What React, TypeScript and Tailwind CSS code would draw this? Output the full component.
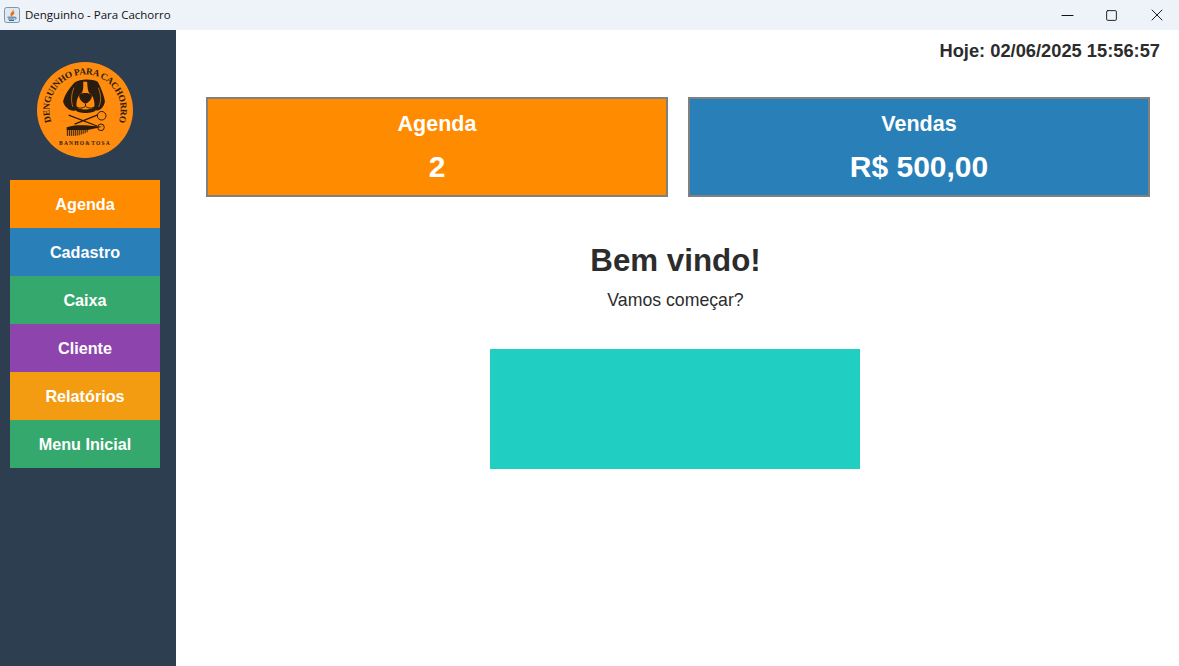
import { Minus, Square, X } from "lucide-react";

const MENU = [
  { label: "Agenda", color: "bg-[#ff8c00]" },
  { label: "Cadastro", color: "bg-[#2980b9]" },
  { label: "Caixa", color: "bg-[#35a86e]" },
  { label: "Cliente", color: "bg-[#8e44ad]" },
  { label: "Relatórios", color: "bg-[#f39c12]" },
  { label: "Menu Inicial", color: "bg-[#35a86e]" },
];

function JavaIcon() {
  return (
    <svg width="16" height="16" viewBox="0 0 16 16" className="shrink-0">
      <rect x="0.5" y="0.5" width="15" height="15" rx="2" fill="#dfe7f0" stroke="#7f97ad" />
      <path d="M9 2c.8 2-3 3.500-2.500 6 .2 1 .8 1.500 1.500 2-.2-1 .2-1.500 1.500-2.500C11 6.500 10.500 5 9.500 4.500 9.800 3.500 9.500 2.500 9 2z" fill="#e8711a" />
      <path d="M3.500 10.200h7.500M4 12h6.500M5 13.500h5" fill="none" stroke="#3f6d96" strokeWidth="1" />
      <path d="M11 10.200c1.800 0 1.800 1.800 0 2" fill="none" stroke="#3f6d96" strokeWidth="0.8" />
    </svg>
  );
}

function TitleBar() {
  return (
    <div className="flex h-[30px] items-center justify-between bg-[#eef2f9] pl-[4px]">
      <div className="flex items-center gap-[5px] font-['Open_Sans',sans-serif] text-[11.5px] text-[#111]">
        <JavaIcon />
        <span>Denguinho - Para Cachorro</span>
      </div>
      <div className="flex h-full items-center text-[#111]">
        <div className="flex w-[44px] justify-center">
          <Minus size={19} strokeWidth={1.26} />
        </div>
        <div className="flex w-[46px] justify-center pr-[2px]">
          <Square size={13} strokeWidth={1.7} />
        </div>
        <div className="flex w-[44px] justify-center">
          <X size={20} strokeWidth={1.15} />
        </div>
      </div>
    </div>
  );
}

function Logo() {
  return (
    <svg width="96" height="96" viewBox="0 0 97 97" className="block">
      <circle cx="48.500" cy="48.500" r="48.500" fill="#ff8c0f" />
      <defs>
        <path id="logo-arc" d="M48.500 84.500a36 36 0 0 1 0-72a36 36 0 0 1 0 72" />
      </defs>
      <text fill="#2b1c10" fontFamily="'Liberation Serif', serif" fontSize="9.400" fontWeight="700" letterSpacing="-0.3">
        <textPath href="#logo-arc" startOffset="50%" textAnchor="middle">
          DENGUINHO PARA CACHORRO
        </textPath>
      </text>
      <g transform="translate(18 16) scale(0.3333)" fill="#2b1c10" stroke="none">
        {/* cabeca do cachorro */}
        <path d="M60 14C75 2 115 2 130 12c10 18 20 43 22 60-4 20-17 30-28 26-4 10-54 12-60 0-14 6-34-6-39-26 5-22 20-42 35-58z" />
        <path d="M86 12h12c1 15 2 28 6 34 10 4 18 22 16 42-4 10-50 12-54 0-2-20 6-38 16-42 4-6 5-19 4-34z" fill="#ff8c0f" />
        <path d="M58 30c-8 20-10 40-3 58M132 30c8 20 10 40 1 58" fill="none" stroke="#ff8c0f" strokeWidth="2" />
        <path d="M74 52c6-8 30-8 38 0 2 12-10 24-19 26-9-2-21-14-19-26z" />
        <path d="M93 78v8M62 84c10 12 24 8 31 2 7 6 21 10 31-2" fill="none" stroke="#2b1c10" strokeWidth="3" />
        {/* tesoura */}
        <path d="M42 113l86 33M60 140l70-28" fill="none" stroke="#2b1c10" strokeWidth="4" />
        <circle cx="142" cy="115" r="13" fill="none" stroke="#2b1c10" strokeWidth="3" />
        <circle cx="140" cy="150" r="10" fill="none" stroke="#2b1c10" strokeWidth="3" />
        {/* pente */}
        <path d="M36 150c24-10 59-7 109-2l-45 10H36z" />
        <path d="M38 156v20M44 156v20M50 156v20M56 156v20M62 156v20M68 156v19M74 156v18M80 156v16M86 156v14M92 156v12M98 156v9" fill="none" stroke="#2b1c10" strokeWidth="3" />
      </g>
      <text x="48.500" y="84" textAnchor="middle" fill="#2b1c10" fontFamily="'Liberation Serif', serif" fontSize="5.500" fontWeight="700" letterSpacing="1.300">
        BANHO&amp;TOSA
      </text>
    </svg>
  );
}

function Sidebar() {
  return (
    <aside className="flex w-[176px] shrink-0 flex-col bg-[#2c3e50] px-[10px] pt-[32px]">
      <div className="flex justify-center pr-[6px]">
        <Logo />
      </div>
      <nav className="mt-[22px] flex flex-col">
        {MENU.map((item) => (
          <button
            key={item.label}
            type="button"
            className={`h-[48px] w-[150px] text-center text-[16.2px] font-bold text-white ${item.color}`}
          >
            {item.label}
          </button>
        ))}
      </nav>
    </aside>
  );
}

function StatCard({ title, value, color }: { title: string; value: string; color: string }) {
  return (
    <div className={`flex h-[100px] flex-1 flex-col items-center border-2 border-[#808080] pt-[13px] text-white ${color}`}>
      <span className="text-[21.5px] font-bold leading-[25px]">{title}</span>
      <span className="mt-[12px] text-[30px] font-bold leading-[36px]">{value}</span>
    </div>
  );
}

export default function App() {
  return (
    <div className="flex h-[666px] w-[1179px] flex-col overflow-hidden bg-white font-['Liberation_Sans',Arial,sans-serif]">
      <TitleBar />
      <div className="flex min-h-0 flex-1">
        <Sidebar />
        <main className="flex min-w-0 flex-1 flex-col">
          <div className="pr-[19px] pt-[10px] text-right text-[18.3px] font-bold leading-[21px] text-[#2c2c2c]">
            Hoje: 02/06/2025 15:56:57
          </div>
          <div className="mt-[36px] flex gap-[20px] pl-[30px] pr-[29px]">
            <StatCard title="Agenda" value="2" color="bg-[#ff8c00]" />
            <StatCard title="Vendas" value="R$ 500,00" color="bg-[#2980b9]" />
          </div>
          <div className="mt-[45px] flex flex-col items-center pr-[6px]">
            <h1 className="pl-[2px] text-[31.3px] font-bold leading-[37px] text-[#2c2c2c]">Bem vindo!</h1>
            <p className="mt-[11px] pl-[2px] text-[17.7px] leading-[21px] text-[#2c2c2c]">Vamos começar?</p>
            <div className="mt-[38px] h-[120px] w-[370px] bg-[#20cfc1]" />
          </div>
        </main>
      </div>
    </div>
  );
}
